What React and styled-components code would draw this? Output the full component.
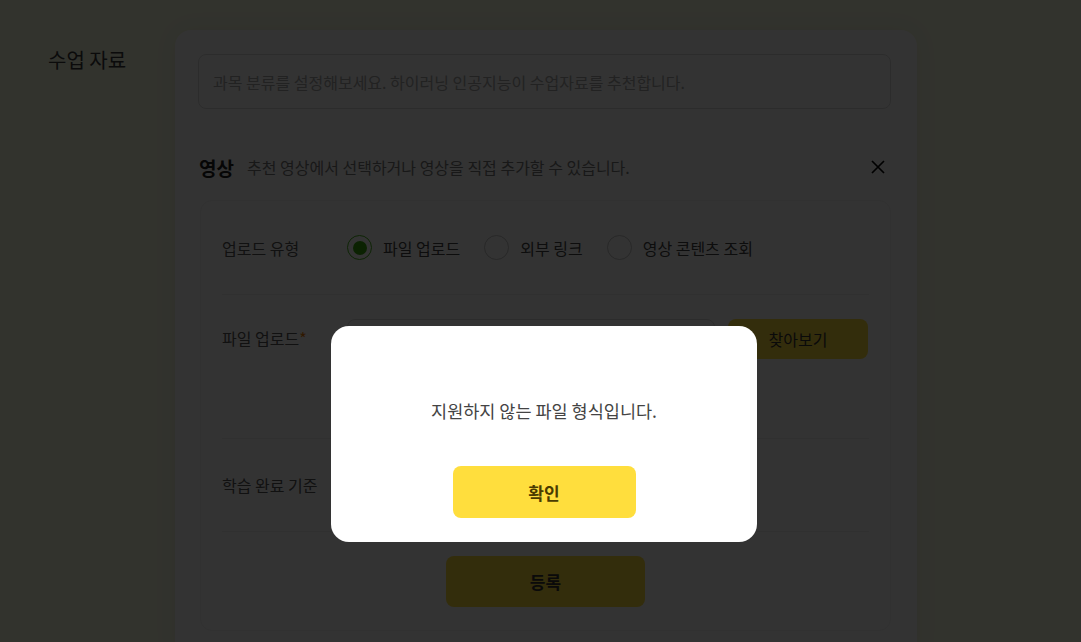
import React, { useState } from 'react'
import styled, { createGlobalStyle } from 'styled-components'


const GlobalStyle = createGlobalStyle`
    html, body {
        margin: 0;
        padding: 0;
        overflow: hidden;
        background: #f8fce2;
        font-family: "Noto Sans CJK KR", "Noto Sans", sans-serif;
        color: #333;
    }
    * {
        box-sizing: border-box;
    }
`

const uploadTypes = [
    { value: 'file', label: '파일 업로드' },
    { value: 'link', label: '외부 링크' },
    { value: 'search', label: '영상 콘텐츠 조회' },
]


function App() {

    const [uploadType, setUploadType] = useState('file')
    const [showAlert, setShowAlert] = useState(true)

    return (
        <>
            <GlobalStyle />
            <Page>
                <SideLabel>수업 자료</SideLabel>

                <Card>
                    <SearchInput placeholder="과목 분류를 설정해보세요. 하이러닝 인공지능이 수업자료를 추천합니다." />

                    <SectionHeader>
                        <SectionTitle>영상</SectionTitle>
                        <SectionDesc>추천 영상에서 선택하거나 영상을 직접 추가할 수 있습니다.</SectionDesc>
                        <CloseButton aria-label="닫기">
                            <svg width="16" height="16" viewBox="0 0 16 16">
                                <path d="M2 2 L14 14 M14 2 L2 14" stroke="#000" strokeWidth="1.7" fill="none" />
                            </svg>
                        </CloseButton>
                    </SectionHeader>

                    <FormBox>
                        <Row height={94}>
                            <Label>업로드 유형</Label>
                            <RadioGroup>
                                {
                                    uploadTypes.map((type) => {
                                        return (
                                            <RadioItem key={type.value} onClick={() => setUploadType(type.value)}>
                                                <RadioCircle checked={uploadType === type.value} />
                                                {type.label}
                                            </RadioItem>
                                        )
                                    })
                                }
                            </RadioGroup>
                        </Row>

                        <Row height={144} top>
                            <Label tall>파일 업로드<Required>*</Required></Label>
                            <FileField>
                                <FileInput />
                                <BrowseButton>찾아보기</BrowseButton>
                            </FileField>
                        </Row>

                        <Row height={93}>
                            <Label>학습 완료 기준</Label>
                        </Row>

                        <Footer>
                            <SubmitButton>등록</SubmitButton>
                        </Footer>
                    </FormBox>
                </Card>
            </Page>

            {
                showAlert &&
                <Overlay>
                    <Modal>
                        <ModalText>지원하지 않는 파일 형식입니다.</ModalText>
                        <ConfirmButton onClick={() => setShowAlert(false)}>확인</ConfirmButton>
                    </Modal>
                </Overlay>
            }
        </>
    )
}

export default App



const Page = styled.div`
    display: flex;
    align-items: flex-start;
    padding: 30px 0 0 48px;
    min-height: 100vh;
`

const SideLabel = styled.div`
    width: 127px;
    flex-shrink: 0;
    padding-top: 16px;
    font-size: 20px;
    line-height: 28px;
    color: #3a3a3a;
`

const Card = styled.div`
    width: 742px;
    flex-shrink: 0;
    background: #ffffff;
    border-radius: 16px;
    padding: 24px 26px 30px 23px;
    box-shadow: 0 0 24px rgba(0, 0, 0, 0.06);
`

const SearchInput = styled.input`
    display: block;
    width: 100%;
    height: 55px;
    border: 1px solid #dddddd;
    border-radius: 8px;
    padding: 0 14px;
    font-family: inherit;
    font-size: 16px;
    color: #333;
    outline: none;

    &::placeholder {
        color: #a8a8a8;
    }
`

const SectionHeader = styled.div`
    display: flex;
    align-items: center;
    height: 28px;
    margin-top: 44px;
`

const SectionTitle = styled.h3`
    margin: 0 13px 0 1px;
    font-size: 19px;
    font-weight: 700;
    color: #222;
`

const SectionDesc = styled.span`
    flex: 1;
    font-size: 16px;
    color: #7a7a7a;
`

const CloseButton = styled.button`
    width: 26px;
    height: 26px;
    display: flex;
    align-items: center;
    justify-content: center;
    padding: 0;
    border: none;
    background: transparent;
    cursor: pointer;
`

const FormBox = styled.div`
    margin-top: 19px;
    margin-left: 2px;
    border: 1px solid #f2f2f2;
    border-radius: 12px;
    padding: 0 21px;
`

const Row = styled.div`
    display: flex;
    align-items: ${props => props.top ? 'flex-start' : 'center'};
    height: ${props => props.height}px;
    padding-top: ${props => props.top ? '24px' : '0'};
    border-bottom: 1px solid #eeeeee;
`

const Label = styled.div`
    width: 125px;
    flex-shrink: 0;
    font-size: 16px;
    line-height: ${props => props.tall ? '38px' : '22px'};
    color: #555;
`

const Required = styled.span`
    color: #ee7a00;
`

const RadioGroup = styled.div`
    display: flex;
    align-items: center;
    gap: 24px;
`

const RadioItem = styled.label`
    display: flex;
    align-items: center;
    gap: 11px;
    font-size: 16px;
    color: #444;
    cursor: pointer;
`

const RadioCircle = styled.span`
    position: relative;
    width: 25px;
    height: 25px;
    border-radius: 50%;
    border: 1px solid ${props => props.checked ? '#46b41a' : '#c4c4c4'};
    background: #fff;

    &::after {
        content: '';
        display: ${props => props.checked ? 'block' : 'none'};
        position: absolute;
        top: 4.5px;
        left: 4.5px;
        width: 14px;
        height: 14px;
        border-radius: 50%;
        background: #3aa80e;
    }
`

const FileField = styled.div`
    display: flex;
    gap: 13px;
`

const FileInput = styled.div`
    width: 368px;
    height: 40px;
    border: 1px solid #dddddd;
    border-radius: 8px;
`

const BrowseButton = styled.button`
    width: 140px;
    height: 40px;
    border: none;
    border-radius: 8px;
    background: #ffde3d;
    font-family: inherit;
    font-size: 16px;
    color: #333;
    cursor: pointer;
`

const Footer = styled.div`
    display: flex;
    justify-content: center;
    padding: 24px 0 23px;
`

const SubmitButton = styled.button`
    width: 199px;
    height: 51px;
    border: none;
    border-radius: 8px;
    background: #ffde3d;
    font-family: inherit;
    font-size: 17px;
    font-weight: 700;
    color: #333;
    cursor: pointer;
`

const Overlay = styled.div`
    position: fixed;
    inset: 0;
    background: rgba(0, 0, 0, 0.8);
    display: flex;
    justify-content: center;
    align-items: flex-start;
    padding: 326px 0 0 7px;
`

const Modal = styled.div`
    width: 426px;
    height: 216px;
    background: #ffffff;
    border-radius: 18px;
    display: flex;
    flex-direction: column;
    align-items: center;
    padding-top: 72px;
`

const ModalText = styled.p`
    margin: 0;
    font-size: 17.5px;
    line-height: 26px;
    color: #444;
`

const ConfirmButton = styled.button`
    margin-top: 42px;
    width: 183px;
    height: 52px;
    border: none;
    border-radius: 8px;
    background: #ffde3d;
    font-family: inherit;
    font-size: 17px;
    font-weight: 700;
    color: #4a3b00;
    cursor: pointer;
`
